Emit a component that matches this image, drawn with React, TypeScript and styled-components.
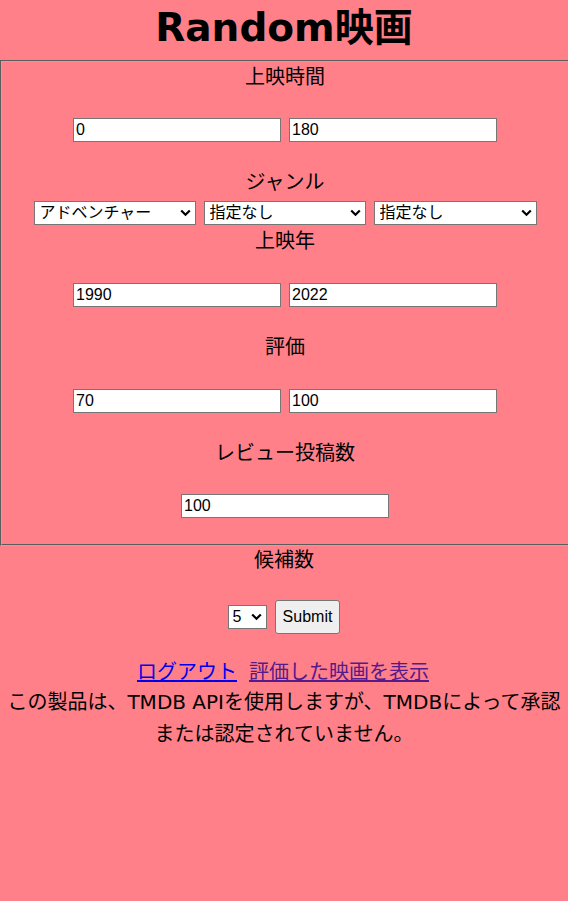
import React from "react";
import styled, { createGlobalStyle } from "styled-components";

const GlobalStyle = createGlobalStyle`
  html, body {
    margin: 0;
    padding: 0;
    background: #ff8088;
  }
  body {
    font-family: "DejaVu Sans", "Noto Sans CJK JP", sans-serif;
    color: #000;
  }
`;

const Page = styled.div`
  display: flex;
  flex-direction: column;
  text-align: center;
`;

const Title = styled.h1`
  margin: 0;
  height: 60px;
  line-height: 55px;
  font-size: 39px;
  font-weight: 700;
  font-family: "DejaVu Sans", "Noto Sans CJK JP", sans-serif;
`;

const Form = styled.form`
  display: flex;
  flex-direction: column;
  align-items: center;
  margin: 0;
`;

const Fieldset = styled.fieldset`
  align-self: stretch;
  margin: 0;
  min-width: 0;
  padding: 3px 0 26px 0;
  border: 2px groove #b0b0b0;
  border-right-width: 0;
  display: flex;
  flex-direction: column;
  align-items: center;
`;

const Label = styled.div<{ $after: number; $before?: number }>`
  height: 24px;
  line-height: 24px;
  font-size: 20px;
  margin-top: ${(p) => p.$before ?? 0}px;
  margin-bottom: ${(p) => p.$after}px;
`;

const Row = styled.div<{ $after: number }>`
  display: flex;
  justify-content: center;
  gap: 8px;
  margin-bottom: ${(p) => p.$after}px;
`;

const TextInput = styled.input`
  box-sizing: border-box;
  width: 208px;
  height: 24px;
  margin: 0;
  padding: 1px 2px;
  border: 1px solid #767676;
  border-radius: 0;
  background: #fff;
  font-family: "Liberation Sans", Arial, sans-serif;
  font-size: 16px;
  color: #000;
`;

const SelectWrap = styled.div`
  position: relative;
  display: inline-flex;
`;

const Select = styled.select<{ $width: number; $latin?: boolean }>`
  appearance: none;
  box-sizing: border-box;
  width: ${(p) => p.$width}px;
  height: 24px;
  margin: 0;
  padding: 0 20px 0 ${(p) => (p.$latin ? 4 : 5)}px;
  border: 1px solid #767676;
  border-radius: 0;
  background: #fff;
  color: #000;
  font-family: ${(p) =>
    p.$latin
      ? `"Liberation Sans", Arial, sans-serif`
      : `"DejaVu Sans", "Noto Sans CJK JP", sans-serif`};
  font-size: 16px;
  line-height: 22px;
`;

const Chevron = styled.svg`
  position: absolute;
  right: 5px;
  top: 8px;
  width: 11px;
  height: 8px;
  pointer-events: none;
`;

const SubmitRow = styled.div`
  display: flex;
  align-items: center;
  gap: 8px;
  margin-top: 28px;
`;

const Button = styled.button`
  box-sizing: border-box;
  height: 34px;
  padding: 0 7px;
  border: 1px solid #767676;
  border-radius: 3px;
  background: #efefef;
  font-family: "Liberation Sans", Arial, sans-serif;
  font-size: 16px;
  color: #000;
`;

const Links = styled.div`
  display: flex;
  justify-content: center;
  gap: 12px;
  margin-top: 26px;
  padding-right: 2px;
  height: 24px;
  line-height: 24px;
  font-size: 20px;
`;

const Link = styled.a<{ $visited?: boolean }>`
  color: ${(p) => (p.$visited ? "#551a8b" : "#0000ee")};
  text-decoration: underline;
`;

const Disclaimer = styled.p`
  margin: 2px 0 0;
  font-size: 20px;
  line-height: 32px;
`;

const genres = [
  "指定なし",
  "アクション",
  "アドベンチャー",
  "アニメーション",
  "コメディ",
  "犯罪",
  "ドキュメンタリー",
  "ドラマ",
  "ファミリー",
  "ファンタジー",
  "歴史",
  "ホラー",
  "音楽",
  "謎",
  "ロマンス",
  "サイエンスフィクション",
  "スリラー",
  "戦争",
  "西洋",
];

function DropDown({
  width,
  value,
  options,
  latin,
}: {
  width: number;
  value: string;
  options: string[];
  latin?: boolean;
}) {
  return (
    <SelectWrap>
      <Select $width={width} $latin={latin} defaultValue={value}>
        {options.map((o) => (
          <option key={o} value={o}>
            {o}
          </option>
        ))}
      </Select>
      <Chevron viewBox="0 0 11 8">
        <polyline
          points="1.2,1.5 5.5,5.8 9.8,1.5"
          fill="none"
          stroke="#000"
          strokeWidth="2.2"
        />
      </Chevron>
    </SelectWrap>
  );
}

export default function App() {
  return (
    <>
      <GlobalStyle />
      <Page>
        <Title>Random映画</Title>
        <Form onSubmit={(e) => e.preventDefault()}>
          <Fieldset>
            <Label $after={29}>上映時間</Label>
            <Row $after={28}>
              <TextInput defaultValue="0" />
              <TextInput defaultValue="180" />
            </Row>
            <Label $after={7}>ジャンル</Label>
            <Row $after={4}>
              <DropDown width={162} value="アドベンチャー" options={genres} />
              <DropDown width={162} value="指定なし" options={genres} />
              <DropDown width={163} value="指定なし" options={genres} />
            </Row>
            <Label $after={30}>上映年</Label>
            <Row $after={28}>
              <TextInput defaultValue="1990" />
              <TextInput defaultValue="2022" />
            </Row>
            <Label $after={30}>評価</Label>
            <Row $after={28}>
              <TextInput defaultValue="70" />
              <TextInput defaultValue="100" />
            </Row>
            <Label $after={29}>レビュー投稿数</Label>
            <Row $after={0}>
              <TextInput defaultValue="100" />
            </Row>
          </Fieldset>
          <Label $after={0} $before={2}>
            候補数
          </Label>
          <SubmitRow>
            <DropDown
              width={39}
              value="5"
              latin
              options={["1", "2", "3", "4", "5", "6", "7", "8", "9", "10"]}
            />
            <Button type="submit">Submit</Button>
          </SubmitRow>
        </Form>
        <Links>
          <Link href="#logout">ログアウト</Link>
          <Link href="#rated" $visited>
            評価した映画を表示
          </Link>
        </Links>
        <Disclaimer>
          この製品は、TMDB APIを使用しますが、TMDBによって承認または認定されていません。
        </Disclaimer>
      </Page>
    </>
  );
}
